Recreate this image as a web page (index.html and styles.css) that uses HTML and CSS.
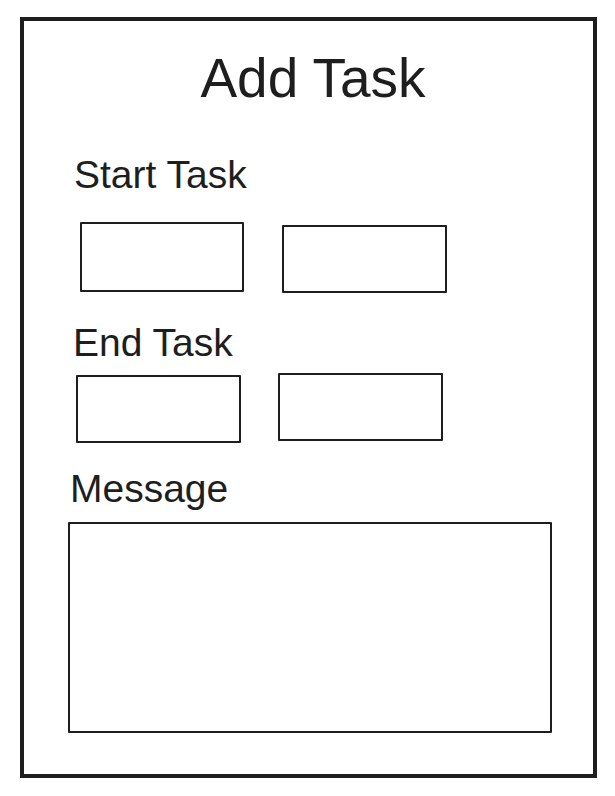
FILE: index.html
```html
<!DOCTYPE html>
<html>
<head>
    <title>Add Task</title>
    <link rel="stylesheet" href="styles.css">
</head>
<body>
    <div class="frame">
        <h1>Add Task</h1>
        <div class="task-form">
            <p class="label label-start">Start Task</p>
            <div class="field-row row-start">
                <div class="field field-tall"></div>
                <div class="field field-low"></div>
            </div>

            <p class="label label-end">End Task</p>
            <div class="field-row row-end">
                <div class="field field-low"></div>
                <div class="field"></div>
            </div>

            <p class="label label-message">Message</p>
            <div class="message-box"></div>
        </div>
    </div>
</body>
</html>
```

FILE: styles.css
```css
body {
    margin: 0;
    background-color: #fff;
    color: #1e1e1e;
    font-family: "Liberation Sans", Arial, sans-serif;
}

.frame {
    box-sizing: border-box;
    height: 761px;
    margin: 17px 18px 18px 20px;
    border: 4px solid #1e1e1e;
}

h1 {
    margin: 30px 0 0;
    padding-left: 9px;
    font-size: 55px;
    font-weight: normal;
    line-height: 55px;
    text-align: center;
}

.task-form {
    padding-left: 48px;
}

.label {
    margin: 0;
    font-size: 39px;
    line-height: 39px;
}

.label-start {
    margin: 49px 0 0 2px;
}

.label-end {
    margin: 30px 0 0 1px;
}

.label-message {
    margin: 26px 0 0 -2px;
}

.field-row {
    display: flex;
    align-items: flex-start;
    gap: 37px;
}

.row-start {
    margin: 28px 0 0 8px;
    gap: 38px;
}

.row-end {
    margin: 11px 0 0 4px;
}

.field {
    box-sizing: border-box;
    width: 165px;
    height: 68px;
    border: 2px solid #1e1e1e;
    border-radius: 1px;
}

/* the sketch boxes are not quite even */
.field-tall {
    width: 164px;
    height: 70px;
}

.field-low {
    margin-top: 3px;
}

.row-end .field-low {
    margin-top: 2px;
}

.message-box {
    box-sizing: border-box;
    width: 484px;
    height: 211px;
    margin: 14px 0 0 -4px;
    border: 2px solid #1e1e1e;
    border-radius: 1px;
}
```
